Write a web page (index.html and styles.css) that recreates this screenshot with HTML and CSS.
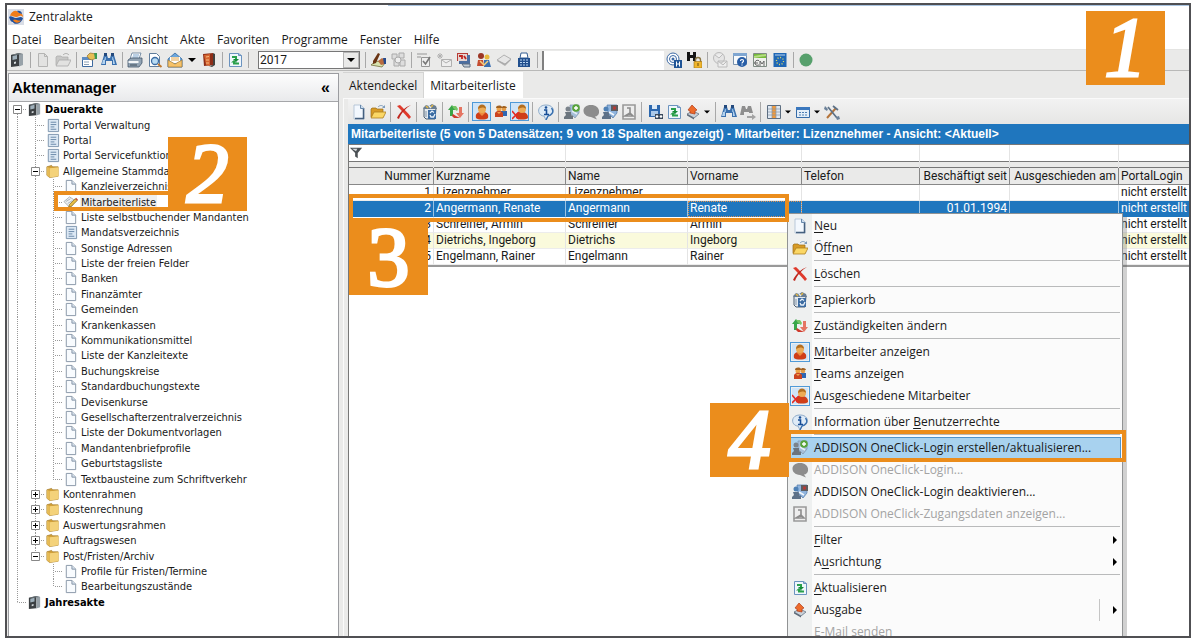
FILE: index.html
```html
<!DOCTYPE html>
<html lang="de">
<head>
<meta charset="utf-8">
<title>Zentralakte</title>
<link rel="stylesheet" href="styles.css">
</head>
<body>
<svg class="defs" aria-hidden="true">
<symbol id="logo" viewBox="0 0 16 16"><path d="M0 0h16v16H0z" fill="#d9dde6"/><path d="M2 7c1-5 7-7 9-3 3 0 4 2 4 4-3-3-5 0-7 0S4 6 2 7z" fill="#f07d1a"/><path d="M1 8c2-2 4 1 7 1s4-2 7 0c-1 5-8 8-10 4-2 0-3-2-4-5z" fill="#24519b"/><path d="M9 2c3-1 5 1 5 3l-3-1zM4 12c2 3 6 2 7 0-3 1-5-1-7 0z" fill="#24519b"/><path d="M5 11c3-2 5 2 8 0-1 3-6 4-8 0z" fill="#f07d1a"/></symbol>
<symbol id="binder" viewBox="0 0 16 16"><path d="M2 3l8-2v13l-8 1z" fill="#3c4043"/><path d="M10 1l4 1v11l-4 1.500z" fill="#98a2a9"/><path d="M3.500 4l4.500-1v4l-4.500 1z" fill="#9fb0bb"/><path d="M5 10l2-.5v2L5 12z" fill="#d8dde0"/><path d="M2 3l8-2 4 1-8 1z" fill="#6d767c"/></symbol>
<symbol id="doc" viewBox="0 0 16 16"><path d="M3.500 1.500h6l4 4v9h-10z" fill="#f8fbfe" stroke="#8594a5"/><path d="M9.500 1.500v4h4" fill="#d5e0ec" stroke="#8594a5"/></symbol>
<symbol id="new" viewBox="0 0 16 16"><path d="M3 1h7l3 3v11H3z" fill="#f3f8fe" stroke="#a9bdd2" stroke-width=".8"/><path d="M12.500 4v10.500H4" fill="none" stroke="#45607f" stroke-width="1.500"/><path d="M9.500 1v3.500H13" fill="#c8d9ec" stroke="#6787a9"/></symbol>
<symbol id="docoff" viewBox="0 0 16 16"><path d="M3.500 1.500h6l3 3v10h-9z" fill="#e2e2e1" stroke="#b4b4b3"/><path d="M9.500 1.500v3h3" fill="none" stroke="#b4b4b3"/></symbol>
<symbol id="list" viewBox="0 0 16 16"><path d="M3.500 1.500h11v13h-11z" fill="#dce8f4" stroke="#7c93ad"/><path d="M6 4.500h6M6 7h6M6 9.500h4M6 12h6" stroke="#6685a6"/></symbol>
<symbol id="edit" viewBox="0 0 16 16"><path d="M1 7l6-5 6 4-5 8z" fill="#eef1f3" stroke="#9aa2a8" stroke-width=".8"/><path d="M3 7l5-3M5 9l5-3" stroke="#a9b4bd"/><path d="M6 13l1-3 6-6 2 2-6 6z" fill="#e6bd45" stroke="#8a6b20" stroke-width=".8"/><path d="M13 4l2 2 1-1-2-2z" fill="#c34a36"/></symbol>
<symbol id="folder" viewBox="0 0 16 16"><path d="M2 3l5-1.500 1 1.500h6V13l-9 1.500L2 12z" fill="#d3a13a" stroke="#9c7423" stroke-width=".7"/><path d="M5 4.500l9.500-1V13L5 14.500z" fill="#f4d27a"/><path d="M2 3l3 1.500v10L2 12z" fill="#e5bb57"/></symbol>
<symbol id="open" viewBox="0 0 16 16"><path d="M1 5l1-1h4l1 1h6v8H1z" fill="#d89b26" stroke="#9b6f18" stroke-width=".7"/><path d="M4 8h12l-3 6H1z" fill="#fbd765" stroke="#ad7e1f" stroke-width=".8"/><path d="M8 3c2-2 4-2 6 0" fill="none" stroke="#7f9dbd"/><path d="M15 1v3h-3z" fill="#7f9dbd"/></symbol>
<symbol id="openoff" viewBox="0 0 16 16"><path d="M1 5l1-1h4l1 1h6v8H1z" fill="#c8c8c7" stroke="#aaa" stroke-width=".7"/><path d="M4 8h12l-3 6H1z" fill="#e2e2e1" stroke="#aaa" stroke-width=".8"/><path d="M8 3c2-2 4-2 6 0" fill="none" stroke="#aaa"/></symbol>
<symbol id="props" viewBox="0 0 16 16"><path d="M1.500 5.500h10v9h-10z" fill="#fff" stroke="#3e6a9f"/><path d="M1 5h11v3H1z" fill="#5d8cc4"/><path d="M3 10h5M3 12.500h5" stroke="#8da1b6"/><path d="M6 4l3-3 6 1v4l-4 2-3-1z" fill="#e7bd55" stroke="#93702b" stroke-width=".7"/><path d="M13 1h3v6h-2z" fill="#3c9a52"/></symbol>
<symbol id="binoc" viewBox="0 0 16 16"><path d="M3 3h3l1 3h2l1-3h3l3 10h-5V9H5v4H0z" fill="#3a70ae"/><path d="M3 1h3v3H3zM10 1h3v3h-3z" fill="#23497d"/><path d="M2 8h2v4H1zM12 8h1l1 4h-2z" fill="#b4d3ef"/><path d="M4 5h1v3H3zM11 5h1l1 3h-2z" fill="#8fb8e0"/></symbol>
<symbol id="binocoff" viewBox="0 0 16 16"><path d="M2 2h3l1 3h1l1-3h3l2 7H9V8H4v3H0z" fill="#8e8e8e"/><path d="M7 12h5v-2l4 3-4 3v-2H7z" fill="#a3a3a3"/></symbol>
<symbol id="print" viewBox="0 0 16 16"><path d="M5 1h9l-2 6H3z" fill="#fff" stroke="#5d7895" stroke-width=".8"/><path d="M6 3h6M5.500 5h6" stroke="#77a1cb"/><path d="M1 8l3-2h11v5l-3 4H1z" fill="#93a4b4" stroke="#42566b" stroke-width=".8"/><path d="M1.500 9h10v2h-10z" fill="#f3f6f8"/><path d="M3 13h7" stroke="#3d4c5b"/></symbol>
<symbol id="preview" viewBox="0 0 16 16"><path d="M2.500 1.500h7l3 3v10h-10z" fill="#fff" stroke="#607d9c"/><circle cx="8" cy="9" r="3.500" fill="#b9dcf4" stroke="#3c6ca3" stroke-width="1.300"/><path d="M11 12l3.500 3" stroke="#c07a31" stroke-width="2"/></symbol>
<symbol id="mail" viewBox="0 0 16 16"><path d="M1 7l7-6 7 6v8H1z" fill="#6ca6dc" stroke="#34689f" stroke-width=".8"/><path d="M3 5h10v6H3z" fill="#fff"/><path d="M4 6h8M4 8h8" stroke="#e5a547"/><path d="M1 15V8l7 4 7-4v7z" fill="#f7c268" stroke="#9b7a3e" stroke-width=".7"/></symbol>
<symbol id="door" viewBox="0 0 16 16"><path d="M2 2l10-1v12l-9 1z" fill="#8e2e18"/><path d="M3 3l6-1v12l-4-1z" fill="#d5642e"/><path d="M12 1l2 1v11l-3 2-3-1 4-1z" fill="#42423f"/><path d="M5 5l3-.5M5 8h3M5 11h3" stroke="#f6ba83"/></symbol>
<symbol id="refresh" viewBox="0 0 16 16"><path d="M2.500 1.500h9l3 2v11h-12z" fill="#eff6fc" stroke="#6b93bf"/><path d="M11.500 1.500v2h3" fill="none" stroke="#6b93bf"/><path d="M5 5h4v3M12 11.500H7V9" fill="none" stroke="#2aa04c" stroke-width="2"/><path d="M6 7h6L9 10z" fill="#178a3a"/><path d="M4 10.500L7 8l3 2.500z" fill="#2aa04c"/></symbol>
<symbol id="sign" viewBox="0 0 16 16"><path d="M1 13l5-4 9 2-3 4z" fill="#d7e2ad" stroke="#73713e" stroke-width=".8"/><path d="M3 9l5-8 2 1-4 9-3 1z" fill="#6a3413"/><path d="M8 9l4-3 3 2v4l-4 1z" fill="#b86b3f"/><path d="M13 6h3v6h-2z" fill="#25498c"/></symbol>
<symbol id="sheets" viewBox="0 0 16 16"><path d="M2 2h5v5H2zM9 1h5v5H9zM4 8h5v6H4zM10 8h5v6h-5z" fill="#ddd" stroke="#aaa"/><circle cx="8" cy="8" r="3" fill="#eee" stroke="#aaa"/></symbol>
<symbol id="checks" viewBox="0 0 16 16"><path d="M1 2h10M1 5h4M5.500 5.500h8v9h-8z" fill="#eee" stroke="#969696"/><path d="M7 9l2.500 3L14 5" fill="none" stroke="#777" stroke-width="1.600"/></symbol>
<symbol id="mailnew" viewBox="0 0 16 16"><path d="M5.500 7.500h10v7h-10z" fill="#eee" stroke="#b0b0b0"/><path d="M6 8l4 3 5-3M4 1v6M1 4h6M2 2l4 4M6 2L2 6" fill="none" stroke="#b0b0b0"/></symbol>
<symbol id="stack" viewBox="0 0 16 16"><path d="M1 1h11v8H1z" fill="#b73b35"/><path d="M3 3h11v9H3z" fill="#4b6ea0"/><path d="M2 2h9v7H2z" fill="#e5d5d2"/><path d="M3 4h3v3M8 4l2 3" stroke="#c0251f" stroke-width="1.800" fill="none"/><path d="M6 12h8v3H8z" fill="#c4cdd6" stroke="#5c6d80"/></symbol>
<symbol id="people" viewBox="0 0 16 16"><circle cx="5" cy="4" r="3" fill="#9c3524"/><circle cx="11" cy="5" r="2.500" fill="#e7b83d"/><path d="M1 14l1-6h5l1 6z" fill="#c54c30"/><path d="M8 15V8h5l2 7z" fill="#3b6fb1"/><path d="M4 9l4 4 4-4" fill="none" stroke="#f4d17e" stroke-width="1.500"/></symbol>
<symbol id="pad" viewBox="0 0 16 16"><path d="M1 9l7-5 7 4-6 6z" fill="#b0b0b0"/><path d="M1 8l7-5 7 4-6 5z" fill="#e6e6e6" stroke="#999" stroke-width=".7"/></symbol>
<symbol id="calc" viewBox="0 0 16 16"><path d="M5 1h6l1 5H4z" fill="#fff" stroke="#345e93"/><path d="M2 6h12v9H2z" fill="#214f8e"/><path d="M4 8h8M4 10.500h8M4 13h8" stroke="#b9d5f2" stroke-dasharray="2 1"/></symbol>
<symbol id="at" viewBox="0 0 16 16"><circle cx="7" cy="7" r="6" fill="#fff" stroke="#3d6aa5"/><circle cx="7" cy="7" r="3.500" fill="none" stroke="#3d6aa5"/><circle cx="7" cy="7" r="1.500" fill="#3d6aa5"/><path d="M8 8h8v8H8z" fill="#1f5496"/><path d="M10.500 9.500v5M13.500 9.500v5M10.500 12h3" stroke="#fff"/></symbol>
<symbol id="lock" viewBox="0 0 16 16"><path d="M1 0h3v3h3V0h3v9H7V6H4v3H1z" fill="#151515"/><path d="M9.500 10V8a2.500 2.500 0 0 1 5 0v2" fill="none" stroke="#8a7644" stroke-width="1.400"/><path d="M8 9.500h8V16H8z" fill="#f0b52c" stroke="#9c6e14" stroke-width=".6"/><path d="M12 11v3" stroke="#6b4a0b"/></symbol>
<symbol id="globeoff" viewBox="0 0 16 16"><circle cx="7" cy="6" r="5.500" fill="#e5e5e5" stroke="#bbb"/><path d="M3 3l4 3 4-4M6 9h9v6H6zM6 9l5 4 4-4" fill="#eee" stroke="#bbb"/></symbol>
<symbol id="help" viewBox="0 0 16 16"><path d="M1.500 1.500h13v11h-13z" fill="#f7fafc" stroke="#7c94ae"/><path d="M1 1h14v3H1z" fill="#7fa6d1"/><circle cx="10" cy="10" r="5" fill="#275da6"/><path d="M8.500 9c0-2 3-2 3 0 0 1-1.500 1-1.500 2.500M10 12.500v1" fill="none" stroke="#fff" stroke-width="1.200"/></symbol>
<symbol id="euro" viewBox="0 0 16 16"><path d="M1.500 1.500h13v13h-13z" fill="#eef0ec" stroke="#7f8b83"/><path d="M2 2h12v4H2z" fill="#75ba3b"/><path d="M2 4l12-2v2L2 6z" fill="#b6dc83"/><path d="M7 8.500c-3-1-4 1-4 2.500s1 3 4 2M2 11h4M8 14V9l2 3 2-3v5" fill="none" stroke="#666"/></symbol>
<symbol id="eu" viewBox="0 0 16 16"><path d="M1.500 1h13v14h-13z" fill="#1f67b5"/><path d="M3 3h10" stroke="#b9d3ee"/><circle cx="8" cy="9" r="3.500" fill="none" stroke="#e0dc65" stroke-dasharray="1 1.700" stroke-width="1.300"/></symbol>
<symbol id="dot" viewBox="0 0 16 16"><circle cx="8" cy="8" r="6.500" fill="#57a06c"/></symbol>
<symbol id="del" viewBox="0 0 16 16"><path d="M1 2l3-1c3 3 8 8 11 12l-2 2C9 10 5 6 1 2z" fill="#df3a2c"/><path d="M15 1C10 4 5 9 3 15l-2-1C4 8 9 3 15 1z" fill="#c0271d"/></symbol>
<symbol id="bin" viewBox="0 0 16 16"><path d="M2 4h12l-1 11H4L2 13z" fill="#e4eaf0" stroke="#4d5e70"/><path d="M1 4l3-3 3 1 3-2 4 2 1 3H2z" fill="#697d91"/><path d="M4 2l2 2M9 3l2-2" stroke="#e4b844" stroke-width="1.500"/><path d="M7 2l2 2" stroke="#e5edf4" stroke-width="1.500"/><path d="M6 6h8v9H6z" fill="#3b6ba1"/><path d="M8 9l2-2 2 1.500M13 10l-1.500 3H9l-1-2" fill="none" stroke="#e8f1fa" stroke-width="1.300"/><path d="M4 7v6" stroke="#8496a7"/></symbol>
<symbol id="swap" viewBox="0 0 16 16"><path d="M2 12V6H0l4-5 4 5H5v6z" fill="#39a648"/><path d="M4 2h4l2 3-1 2-3-2z" fill="#76c565"/><path d="M11 3h3v6h2l-4 5-4-5h3z" fill="#e57562"/><path d="M12 14H6l-2-2 1-2 3 2z" fill="#cf3a2d"/></symbol>
<symbol id="user" viewBox="0 0 16 16"><path d="M2 14c-1-5 2-6 6-6s7 1 6 6c-2 2-10 2-12 0z" fill="#cf3e18"/><path d="M5 9l3 3 3-3v-2H5z" fill="#ee8a3d"/><circle cx="8" cy="5" r="4" fill="#ecab55"/><path d="M4 5c0-6 8-6 8 0-2-2-5-2-8 0z" fill="#b46e1f"/></symbol>
<symbol id="team" viewBox="0 0 16 16"><path d="M8 7h6v5H8z" fill="#2e66b3"/><circle cx="6" cy="5" r="2.500" fill="#eda54a"/><circle cx="11" cy="5" r="2.300" fill="#e39a45"/><path d="M3 4c0-3 5-3 6-1 1-2 5-1 5 1z" fill="#a2611f"/><path d="M2 13V9c2-3 6-3 8 0v4z" fill="#cc4420"/><path d="M4 8l2 2 2-2z" fill="#f0a24c"/></symbol>
<symbol id="userx" viewBox="0 0 16 16"><path d="M4 14c-1-5 1-6 5-6s7 1 7 6c-2 2-10 2-12 0z" fill="#cf3e18"/><circle cx="10" cy="5" r="4" fill="#ecab55"/><path d="M6 5c0-6 8-6 8 0-2-2-5-2-8 0z" fill="#b46e1f"/><path d="M0 7l7 8M7 8l-7 7" stroke="#e32a23" stroke-width="1.600"/></symbol>
<symbol id="info" viewBox="0 0 16 16"><path d="M8 1c10 0 9 11 2 11l-2 4-2-4C-1 12-2 1 8 1z" fill="#deebf7" stroke="#8eabc9"/><path d="M13.500 4c3 4 0 7-3.500 8l-2 4" fill="none" stroke="#386fae" stroke-width="1.300"/><path d="M6 6h2.500v4.500M6 10.500h5" fill="none" stroke="#174d96" stroke-width="1.600"/><circle cx="8" cy="3.500" r="1.300" fill="#174d96"/></symbol>
<symbol id="login" viewBox="0 0 16 16"><path d="M6 1h9v8l-4 5-5-5z" fill="#a5bfda" stroke="#7f95ac" stroke-width=".7"/><circle cx="4" cy="5" r="2.500" fill="#7b838b"/><path d="M1 8h6v3l2 1v3H0v-2l2-2z" fill="#6b747d"/><path d="M8 7l5 3" stroke="#e5eef7" stroke-width="1.500"/><circle cx="12" cy="4" r="3.800" fill="#58a43a"/><path d="M12 2v4M10 4h4" stroke="#fff" stroke-width="1.400"/></symbol>
<symbol id="bubble" viewBox="0 0 16 16"><path d="M8 1c10 0 10 11 4 11.500l2 3-6-2.500C-2 12-2 1 8 1z" fill="#8c8c8c"/></symbol>
<symbol id="loginoff" viewBox="0 0 16 16"><path d="M5 1h10v8l-4 5-5-5z" fill="#8fb4de" stroke="#4d77a7" stroke-width=".7"/><circle cx="4" cy="5" r="2.500" fill="#4e80b5"/><path d="M1 8h6v3l2 1v3H0v-2l2-2z" fill="#5d7188"/><path d="M7 8l5 3" stroke="#f2f7fb" stroke-width="1.500"/><path d="M9 1h7v6H9z" fill="#5c5c60"/><path d="M11 2.500h3v3h-3z" fill="#b33c37"/></symbol>
<symbol id="access" viewBox="0 0 16 16"><path d="M2 1h12v14H2z" fill="#ededed" stroke="#999" stroke-width="1.600"/><path d="M6 4h3v5l-5 3h8L9 9" fill="none" stroke="#8c8c8c" stroke-width="1.600"/></symbol>
<symbol id="save" viewBox="0 0 16 16"><path d="M2 1h11v12H2z" fill="#2d68ae"/><path d="M5 1h5v4H5z" fill="#dce9f5"/><path d="M4 7h7v5H4z" fill="#aac9e9"/><path d="M8 10h8v5H8z" fill="#38485a"/><circle cx="10" cy="12.500" r="1.300" fill="#fff"/><circle cx="14" cy="12.500" r="1.300" fill="#fff"/></symbol>
<symbol id="output" viewBox="0 0 16 16"><path d="M2 10l6-3 6 3-5 4z" fill="#c9d1d9" stroke="#667585" stroke-width=".8"/><path d="M2 10l7 4v1.500l-7-4z" fill="#5c6876"/><path d="M7 1l5 5-2 1v3l-5-1V7L3 6z" fill="#ed6b2b" stroke="#b03b18" stroke-width=".7"/></symbol>
<symbol id="cols" viewBox="0 0 16 16"><path d="M1.500 1.500h13v13h-13z" fill="#dfe8f2" stroke="#5d6e81"/><path d="M6 2h4v12H6z" fill="#f39a3a"/><path d="M2 5h12M2 8h12M2 11h12M6 2v12M10 2v12" stroke="#8796a8" stroke-width=".7"/></symbol>
<symbol id="cal" viewBox="0 0 16 16"><path d="M1.500 3.500h13v10h-13z" fill="#e4eef8" stroke="#356ba8"/><path d="M1 3h14v3H1z" fill="#3a77bd"/><path d="M4 8.500h8M4 11h8" stroke="#4d7eb4" stroke-dasharray="2 1"/></symbol>
<symbol id="tools" viewBox="0 0 16 16"><path d="M3 14L12 4" stroke="#b5743a" stroke-width="2"/><path d="M9 2l5 4M4 3l9 11" stroke="#5c7187" stroke-width="1.700"/><path d="M1 2l3 3-1 2-3-2zM12 13l3-1 1 3-3 1z" fill="#6b8199"/></symbol>
<symbol id="funnel" viewBox="0 0 16 16"><path d="M1 2h14L10 8v6l-3-2V8z" fill="#4b5054"/><path d="M3.500 3h6L8 6z" fill="#d6dadd"/></symbol>
<symbol id="down" viewBox="0 0 8 8"><path d="M0 2h8L4 6z" fill="#000"/></symbol>
<symbol id="right" viewBox="0 0 8 8"><path d="M2 0l4 4-4 4z" fill="#000"/></symbol>
<symbol id="plus" viewBox="0 0 9 9"><path d="M.5.500h8v8h-8z" fill="#fff" stroke="#888"/><path d="M2 4.500h5M4.500 2v5" stroke="#000"/></symbol>
<symbol id="minus" viewBox="0 0 9 9"><path d="M.5.500h8v8h-8z" fill="#fff" stroke="#888"/><path d="M2 4.500h5" stroke="#000"/></symbol>
</svg>

<div class="window">
  <header class="titlebar"><svg class="ico"><use href="#logo"/></svg><span>Zentralakte</span></header>
  <nav class="menubar" aria-label="Hauptmenü">
    <button>Datei</button><button>Bearbeiten</button><button>Ansicht</button><button>Akte</button><button>Favoriten</button><button>Programme</button><button>Fenster</button><button>Hilfe</button>
  </nav>
  <div class="toolbar" role="toolbar" aria-label="Hauptleiste">
    <button class="tb" aria-label="Akte"><svg class="ico"><use href="#binder"/></svg></button><i class="sep"></i>
    <button class="tb" aria-label="Neu" disabled><svg class="ico"><use href="#docoff"/></svg></button>
    <button class="tb" aria-label="Öffnen" disabled><svg class="ico"><use href="#openoff"/></svg></button><i class="sep"></i>
    <button class="tb" aria-label="Eigenschaften"><svg class="ico"><use href="#props"/></svg></button>
    <button class="tb" aria-label="Suchen"><svg class="ico"><use href="#binoc"/></svg></button><i class="sep"></i>
    <button class="tb" aria-label="Drucken"><svg class="ico"><use href="#print"/></svg></button>
    <button class="tb" aria-label="Vorschau"><svg class="ico"><use href="#preview"/></svg></button>
    <button class="tb" aria-label="E-Mail"><svg class="ico"><use href="#mail"/></svg></button>
    <button class="tb arrow wide" aria-label="E-Mail Optionen"><svg><use href="#down"/></svg></button>
    <button class="tb" aria-label="Beenden"><svg class="ico"><use href="#door"/></svg></button><i class="sep"></i>
    <button class="tb" aria-label="Aktualisieren"><svg class="ico"><use href="#refresh"/></svg></button><i class="sep"></i>
    <span class="combo"><select aria-label="Jahr"><option>2017</option></select><span class="combo-btn"><svg><use href="#down"/></svg></span></span><i class="sep"></i>
    <button class="tb" aria-label="Signieren"><svg class="ico"><use href="#sign"/></svg></button>
    <button class="tb" aria-label="Blätter" disabled><svg class="ico"><use href="#sheets"/></svg></button><i class="sep"></i>
    <button class="tb" aria-label="Prüfen" disabled><svg class="ico"><use href="#checks"/></svg></button>
    <button class="tb" aria-label="Neue Nachricht" disabled><svg class="ico"><use href="#mailnew"/></svg></button>
    <button class="tb" aria-label="Termine"><svg class="ico"><use href="#stack"/></svg></button>
    <button class="tb" aria-label="Personen"><svg class="ico"><use href="#people"/></svg></button>
    <button class="tb" aria-label="Notiz" disabled><svg class="ico"><use href="#pad"/></svg></button>
    <button class="tb" aria-label="Rechner"><svg class="ico"><use href="#calc"/></svg></button><i class="sep"></i>
    <input class="quick" type="text" aria-label="Schnellsuche">
    <button class="tb" aria-label="Suche im Web"><svg class="ico"><use href="#at"/></svg></button>
    <button class="tb" aria-label="Sperren"><svg class="ico"><use href="#lock"/></svg></button><i class="sep"></i>
    <button class="tb" aria-label="Web-Post" disabled><svg class="ico"><use href="#globeoff"/></svg></button>
    <button class="tb" aria-label="Hilfe"><svg class="ico"><use href="#help"/></svg></button>
    <button class="tb" aria-label="Euro"><svg class="ico"><use href="#euro"/></svg></button>
    <button class="tb" aria-label="EU"><svg class="ico"><use href="#eu"/></svg></button><i class="sep"></i>
    <button class="tb" aria-label="Status"><svg class="ico"><use href="#dot"/></svg></button>
  </div>

  <div class="body">
    <aside class="sidebar">
      <div class="side-head"><h2>Aktenmanager</h2><button aria-label="Einklappen">«</button></div>
      <ul class="tree">
        <li><button class="g down h" aria-label="Zuklappen"><svg><use href="#minus"/></svg></button><svg class="ico"><use href="#binder"/></svg><a href="#" class="root">Dauerakte</a></li>
        <li><i class="g v"></i><i class="g v h"></i><svg class="ico"><use href="#list"/></svg><a href="#">Portal Verwaltung</a></li>
        <li><i class="g v"></i><i class="g v h"></i><svg class="ico"><use href="#list"/></svg><a href="#">Portal</a></li>
        <li><i class="g v"></i><i class="g v h"></i><svg class="ico"><use href="#list"/></svg><a href="#">Portal Servicefunktionen</a></li>
        <li><i class="g v"></i><button class="g v h" aria-label="Zuklappen"><svg><use href="#minus"/></svg></button><svg class="ico"><use href="#folder"/></svg><a href="#">Allgemeine Stammdaten</a></li>
        <li><i class="g v"></i><i class="g v"></i><i class="g v h"></i><svg class="ico"><use href="#doc"/></svg><a href="#">Kanzleiverzeichnis</a></li>
        <li><i class="g v"></i><i class="g v"></i><i class="g v h"></i><svg class="ico"><use href="#edit"/></svg><a href="#" class="current">Mitarbeiterliste</a></li>
        <li><i class="g v"></i><i class="g v"></i><i class="g v h"></i><svg class="ico"><use href="#doc"/></svg><a href="#">Liste selbstbuchender Mandanten</a></li>
        <li><i class="g v"></i><i class="g v"></i><i class="g v h"></i><svg class="ico"><use href="#list"/></svg><a href="#">Mandatsverzeichnis</a></li>
        <li><i class="g v"></i><i class="g v"></i><i class="g v h"></i><svg class="ico"><use href="#doc"/></svg><a href="#">Sonstige Adressen</a></li>
        <li><i class="g v"></i><i class="g v"></i><i class="g v h"></i><svg class="ico"><use href="#doc"/></svg><a href="#">Liste der freien Felder</a></li>
        <li><i class="g v"></i><i class="g v"></i><i class="g v h"></i><svg class="ico"><use href="#doc"/></svg><a href="#">Banken</a></li>
        <li><i class="g v"></i><i class="g v"></i><i class="g v h"></i><svg class="ico"><use href="#doc"/></svg><a href="#">Finanzämter</a></li>
        <li><i class="g v"></i><i class="g v"></i><i class="g v h"></i><svg class="ico"><use href="#doc"/></svg><a href="#">Gemeinden</a></li>
        <li><i class="g v"></i><i class="g v"></i><i class="g v h"></i><svg class="ico"><use href="#doc"/></svg><a href="#">Krankenkassen</a></li>
        <li><i class="g v"></i><i class="g v"></i><i class="g v h"></i><svg class="ico"><use href="#doc"/></svg><a href="#">Kommunikationsmittel</a></li>
        <li><i class="g v"></i><i class="g v"></i><i class="g v h"></i><svg class="ico"><use href="#doc"/></svg><a href="#">Liste der Kanzleitexte</a></li>
        <li><i class="g v"></i><i class="g v"></i><i class="g v h"></i><svg class="ico"><use href="#doc"/></svg><a href="#">Buchungskreise</a></li>
        <li><i class="g v"></i><i class="g v"></i><i class="g v h"></i><svg class="ico"><use href="#doc"/></svg><a href="#">Standardbuchungstexte</a></li>
        <li><i class="g v"></i><i class="g v"></i><i class="g v h"></i><svg class="ico"><use href="#doc"/></svg><a href="#">Devisenkurse</a></li>
        <li><i class="g v"></i><i class="g v"></i><i class="g v h"></i><svg class="ico"><use href="#doc"/></svg><a href="#">Gesellschafterzentralverzeichnis</a></li>
        <li><i class="g v"></i><i class="g v"></i><i class="g v h"></i><svg class="ico"><use href="#doc"/></svg><a href="#">Liste der Dokumentvorlagen</a></li>
        <li><i class="g v"></i><i class="g v"></i><i class="g v h"></i><svg class="ico"><use href="#doc"/></svg><a href="#">Mandantenbriefprofile</a></li>
        <li><i class="g v"></i><i class="g v"></i><i class="g v h"></i><svg class="ico"><use href="#doc"/></svg><a href="#">Geburtstagsliste</a></li>
        <li><i class="g v"></i><i class="g v"></i><i class="g up h"></i><svg class="ico"><use href="#doc"/></svg><a href="#">Textbausteine zum Schriftverkehr</a></li>
        <li><i class="g v"></i><button class="g v h" aria-label="Aufklappen"><svg><use href="#plus"/></svg></button><svg class="ico"><use href="#folder"/></svg><a href="#">Kontenrahmen</a></li>
        <li><i class="g v"></i><button class="g v h" aria-label="Aufklappen"><svg><use href="#plus"/></svg></button><svg class="ico"><use href="#folder"/></svg><a href="#">Kostenrechnung</a></li>
        <li><i class="g v"></i><button class="g v h" aria-label="Aufklappen"><svg><use href="#plus"/></svg></button><svg class="ico"><use href="#folder"/></svg><a href="#">Auswertungsrahmen</a></li>
        <li><i class="g v"></i><button class="g v h" aria-label="Aufklappen"><svg><use href="#plus"/></svg></button><svg class="ico"><use href="#folder"/></svg><a href="#">Auftragswesen</a></li>
        <li><i class="g v"></i><button class="g up h" aria-label="Zuklappen"><svg><use href="#minus"/></svg></button><svg class="ico"><use href="#folder"/></svg><a href="#">Post/Fristen/Archiv</a></li>
        <li><i class="g v"></i><i class="g"></i><i class="g v h"></i><svg class="ico"><use href="#doc"/></svg><a href="#">Profile für Fristen/Termine</a></li>
        <li><i class="g v"></i><i class="g"></i><i class="g up h"></i><svg class="ico"><use href="#doc"/></svg><a href="#">Bearbeitungszustände</a></li>
        <li><i class="g up h"></i><svg class="ico"><use href="#binder"/></svg><a href="#" class="root">Jahresakte</a></li>
      </ul>
    </aside>

    <main class="main">
      <div class="tabs" role="tablist"><button role="tab">Aktendeckel</button><button role="tab" aria-selected="true">Mitarbeiterliste</button></div>
      <div class="panel">
        <div class="toolbar list-tools" role="toolbar" aria-label="Listenleiste">
          <button class="tb" aria-label="Neu"><svg class="ico"><use href="#new"/></svg></button>
          <button class="tb" aria-label="Öffnen"><svg class="ico"><use href="#open"/></svg></button><i class="sep"></i>
          <button class="tb" aria-label="Löschen"><svg class="ico"><use href="#del"/></svg></button><i class="sep"></i>
          <button class="tb" aria-label="Papierkorb"><svg class="ico"><use href="#bin"/></svg></button><i class="sep"></i>
          <button class="tb" aria-label="Zuständigkeiten ändern"><svg class="ico"><use href="#swap"/></svg></button><i class="sep"></i>
          <button class="tb on" aria-label="Mitarbeiter anzeigen"><svg class="ico"><use href="#user"/></svg></button>
          <button class="tb" aria-label="Teams anzeigen"><svg class="ico"><use href="#team"/></svg></button>
          <button class="tb on" aria-label="Ausgeschiedene Mitarbeiter"><svg class="ico"><use href="#userx"/></svg></button><i class="sep"></i>
          <button class="tb" aria-label="Benutzerrechte"><svg class="ico"><use href="#info"/></svg></button><i class="sep"></i>
          <button class="tb" aria-label="Login erstellen"><svg class="ico"><use href="#login"/></svg></button>
          <button class="tb" aria-label="Login" disabled><svg class="ico"><use href="#bubble"/></svg></button>
          <button class="tb" aria-label="Login deaktivieren"><svg class="ico"><use href="#loginoff"/></svg></button>
          <button class="tb" aria-label="Zugangsdaten" disabled><svg class="ico"><use href="#access"/></svg></button><i class="sep"></i>
          <button class="tb" aria-label="Speichern"><svg class="ico"><use href="#save"/></svg></button>
          <button class="tb" aria-label="Aktualisieren"><svg class="ico"><use href="#refresh"/></svg></button>
          <button class="tb" aria-label="Ausgabe"><svg class="ico"><use href="#output"/></svg></button>
          <button class="tb arrow" aria-label="Ausgabe Optionen"><svg><use href="#down"/></svg></button><i class="sep"></i>
          <button class="tb" aria-label="Suchen"><svg class="ico"><use href="#binoc"/></svg></button>
          <button class="tb" aria-label="Weitersuchen" disabled><svg class="ico"><use href="#binocoff"/></svg></button><i class="sep"></i>
          <button class="tb" aria-label="Spalten"><svg class="ico"><use href="#cols"/></svg></button>
          <button class="tb arrow" aria-label="Spalten Optionen"><svg><use href="#down"/></svg></button>
          <button class="tb" aria-label="Ansicht"><svg class="ico"><use href="#cal"/></svg></button>
          <button class="tb arrow" aria-label="Ansicht Optionen"><svg><use href="#down"/></svg></button>
          <button class="tb" aria-label="Werkzeuge"><svg class="ico"><use href="#tools"/></svg></button>
        </div>
        <h1 class="list-title">Mitarbeiterliste (5 von 5 Datensätzen; 9 von 18 Spalten angezeigt) - Mitarbeiter: Lizenznehmer - Ansicht: &lt;Aktuell&gt;</h1>
        <div class="sheet">
          <table>
            <colgroup><col class="c1"><col class="c2"><col class="c3"><col class="c4"><col class="c5"><col class="c6"><col class="c7"><col></colgroup>
            <thead>
              <tr class="filter"><td><svg class="funnel"><use href="#funnel"/></svg></td><td></td><td></td><td></td><td></td><td></td><td></td><td></td></tr>
              <tr><th class="r">Nummer</th><th>Kurzname</th><th>Name</th><th>Vorname</th><th>Telefon</th><th class="r">Beschäftigt seit</th><th class="r">Ausgeschieden am</th><th>PortalLogin</th></tr>
            </thead>
            <tbody>
              <tr><td class="r">1</td><td>Lizenznehmer</td><td>Lizenznehmer</td><td></td><td></td><td></td><td></td><td>nicht erstellt</td></tr>
              <tr class="sel"><td class="r">2</td><td>Angermann, Renate</td><td>Angermann</td><td class="focus">Renate</td><td></td><td class="r">01.01.1994</td><td></td><td>nicht erstellt</td></tr>
              <tr><td class="r">3</td><td>Schreiner, Armin</td><td>Schreiner</td><td>Armin</td><td></td><td></td><td></td><td>nicht erstellt</td></tr>
              <tr class="alt"><td class="r">4</td><td>Dietrichs, Ingeborg</td><td>Dietrichs</td><td>Ingeborg</td><td></td><td></td><td></td><td>nicht erstellt</td></tr>
              <tr><td class="r">5</td><td>Engelmann, Rainer</td><td>Engelmann</td><td>Rainer</td><td></td><td></td><td></td><td>nicht erstellt</td></tr>
            </tbody>
          </table>
        </div>
      </div>
    </main>
  </div>

  <div class="context" role="menu">
    <button role="menuitem"><svg class="ico"><use href="#new"/></svg><span><u>N</u>eu</span></button>
    <button role="menuitem"><svg class="ico"><use href="#open"/></svg><span>Ö<u>f</u>fnen</span></button>
    <hr>
    <button role="menuitem"><svg class="ico"><use href="#del"/></svg><span><u>L</u>öschen</span></button>
    <hr>
    <button role="menuitem"><svg class="ico"><use href="#bin"/></svg><span><u>P</u>apierkorb</span></button>
    <hr>
    <button role="menuitem"><svg class="ico"><use href="#swap"/></svg><span><u>Z</u>uständigkeiten ändern</span></button>
    <hr>
    <button role="menuitem"><svg class="ico on"><use href="#user"/></svg><span><u>M</u>itarbeiter anzeigen</span></button>
    <button role="menuitem"><svg class="ico"><use href="#team"/></svg><span><u>T</u>eams anzeigen</span></button>
    <button role="menuitem"><svg class="ico on"><use href="#userx"/></svg><span><u>A</u>usgeschiedene Mitarbeiter</span></button>
    <hr>
    <button role="menuitem"><svg class="ico"><use href="#info"/></svg><span>Information über <u>B</u>enutzerrechte</span></button>
    <hr>
    <button role="menuitem" class="hot"><svg class="ico"><use href="#login"/></svg><span>ADDISON OneClick-Login erstellen/aktualisieren...</span></button>
    <button role="menuitem" disabled><svg class="ico"><use href="#bubble"/></svg><span>ADDISON OneClick-Login...</span></button>
    <button role="menuitem"><svg class="ico"><use href="#loginoff"/></svg><span>ADDISON OneClick-Login deaktivieren...</span></button>
    <button role="menuitem" disabled><svg class="ico"><use href="#access"/></svg><span>ADDISON OneClick-Zugangsdaten anzeigen...</span></button>
    <hr>
    <button role="menuitem"><i class="ico"></i><span><u>F</u>ilter</span><svg class="more"><use href="#right"/></svg></button>
    <button role="menuitem"><i class="ico"></i><span>A<u>u</u>srichtung</span><svg class="more"><use href="#right"/></svg></button>
    <hr>
    <button role="menuitem"><svg class="ico"><use href="#refresh"/></svg><span><u>A</u>ktualisieren</span></button>
    <button role="menuitem" class="split"><svg class="ico"><use href="#output"/></svg><span>Ausgabe</span><svg class="more"><use href="#right"/></svg></button>
    <button role="menuitem" disabled><i class="ico"></i><span>E-Mail senden</span></button>
  </div>

  <div class="frame f2"></div><div class="frame f3"></div><div class="frame f4"></div>
  <div class="step s1">1</div><div class="step s2">2</div><div class="step s3">3</div><div class="step s4">4</div>
</div>
</body>
</html>
```
FILE: styles.css
```css
* { box-sizing: border-box; }
body { margin: 0; padding: 3px 2px 4px 5px; background: #fff; color: #1a1a1a; font: 12px/16px "Open Sans", "Noto Sans", sans-serif; }
button, select, input { font: inherit; color: inherit; margin: 0; padding: 0; border: 0; background: none; border-radius: 0; }
.defs { position: absolute; width: 0; height: 0; }
.ico { width: 16px; height: 16px; flex: none; display: block; }

.window { position: relative; display: flex; flex-direction: column; height: calc(100vh - 7px); min-height: 560px; border: 2px solid #505053; background: #eaeae9; overflow: hidden; }
.titlebar { display: flex; align-items: center; gap: 5px; height: 24px; padding-left: 1px; background: linear-gradient(to right, transparent 381px, #a9c5e2 381px) 0 0 / 100% 1px no-repeat #fff; }
.menubar { display: flex; gap: 12px; height: 21px; padding: 1px 0 0 5px; background: #fff; border-bottom: 1px solid #e4e4e2; }

.toolbar { display: flex; align-items: center; height: 21px; flex: none; background: #eaeae9; border-bottom: 1px solid #b9b9b8; }
.tb { display: flex; align-items: center; justify-content: center; width: 20px; height: 18px; flex: none; }
.tb svg { flex: none; }
.arrow svg { width: 6px; height: 6px; }
.arrow.wide { width: 14px; }
.arrow.wide svg { width: 8px; height: 8px; }
.sep { width: 1px; height: 16px; margin: 0 2px 0 3px; background: #a8a8a8; flex: none; }
.combo { display: flex; width: 102px; height: 18px; margin: 0 2px 0 7px; background: #fff; border: 1px solid #777; flex: none; }
.combo select { flex: 1; min-width: 0; appearance: none; padding-left: 1px; font: 12px/16px Roboto, sans-serif; }
.combo-btn { display: flex; align-items: center; justify-content: center; width: 16px; background: #eaeae9; border: 1px solid #b5b5b5; pointer-events: none; }
.combo-btn svg { width: 8px; height: 8px; }
.quick { width: 122px; height: 19px; margin-left: 2px; background: #fff; border-left: 2px solid #808080; flex: none; }

.body { display: grid; grid-template-columns: 332px minmax(0, 1fr); gap: 4px; flex: 1; min-height: 0; }
.sidebar { display: flex; flex-direction: column; min-height: 0; margin: 2px 0 0 1px; border: 1px solid #9b9ca0; border-bottom: 0; background: #fff; }
.side-head { display: flex; align-items: center; justify-content: space-between; height: 28px; flex: none; padding: 0 8px 0 3px; background: linear-gradient(#fdfdfd, #e9eaec); border-bottom: 1px solid #a5a6a9; }
.side-head h2 { margin: 0; font: bold 15px/18px "Liberation Sans", sans-serif; color: #000; }
.side-head button { font: bold 16px/16px "Liberation Sans", sans-serif; color: #000; }

.tree { display: flex; flex-direction: column; flex: 1; min-height: 0; margin: 0; padding: 0 0 26px; list-style: none; font: 11px/15px "DejaVu Sans Condensed", "DejaVu Sans", sans-serif; }
.tree li { display: flex; align-items: center; flex: 1 1 0; min-height: 0; }
.tree .ico { width: 15px; height: 15px; margin-right: 2px; }
.tree a { color: inherit; text-decoration: none; padding: 0 1px; white-space: nowrap; }
.tree .root { font-weight: bold; color: #000; }
.tree .current { background: #efefee; }
.g { display: flex; align-items: center; justify-content: center; width: 18px; padding-right: 1px; align-self: stretch; flex: none; --v: repeating-linear-gradient(to bottom, #999 0 1px, #fff 1px 2px); --h: linear-gradient(transparent, transparent); --vs: 8px 0 / 1px 0; background: var(--v) var(--vs) no-repeat, var(--h) 8px 50% / 10px 1px no-repeat; }
.g svg { width: 9px; height: 9px; }
.g.v { --vs: 8px 0 / 1px 100%; }
.g.up { --vs: 8px 0 / 1px 50%; }
.g.down { --vs: 8px 100% / 1px 50%; }
.g.h { --h: repeating-linear-gradient(to right, #999 0 1px, #fff 1px 2px); }

.main { display: flex; flex-direction: column; min-width: 0; min-height: 0; }
.tabs { display: flex; height: 27px; flex: none; padding-top: 1px; }
.tabs button { padding: 0 6px; border: 1px solid #d4d4d3; border-width: 1px 1px 0 0; }
.tabs [aria-selected] { background: #fff; border-color: #fff; }
.panel { display: flex; flex-direction: column; flex: 1; min-height: 0; padding-left: 4px; border: 1px solid #fafafa; border-width: 1px 0 0 1px; background: #eaeae9; }
.list-tools { height: 25px; border: 0; padding-left: 1px; background: linear-gradient(#f2f2f2, #e6e6e5); }
.list-tools .tb { width: 19px; }
.list-tools .tb.on { height: 19px; background: #cfe4f7; border: 1px solid #4f9ad8; }
.list-tools .tb.arrow { width: 10px; }
.list-tools .sep { height: 20px; margin: 0 3px; }
.list-title { margin: 0; padding: 0 3px; height: 20px; flex: none; background: #1f76be; color: #fff; font: bold 12px/20px "Liberation Sans", sans-serif; white-space: nowrap; overflow: hidden; }
.sheet { flex: 1; background: #fff; border-left: 1px solid #777; border-top: 1px solid #777; }
table { width: 100%; table-layout: fixed; border-collapse: separate; border-spacing: 0; border-bottom: 2px solid #999; font: 12px/15px Roboto, sans-serif; }
.c1 { width: 85px; } .c2 { width: 132px; } .c3 { width: 122px; } .c4 { width: 114px; } .c5 { width: 118px; } .c6 { width: 90px; } .c7 { width: 109px; }
th, td { height: 16px; padding: 0 2px; text-align: left; font-weight: normal; white-space: nowrap; overflow: hidden; border-right: 1px solid #e4e4e4; border-bottom: 1px solid #ececec; }
th { height: 17px; background: #eaeae9; border-color: #888; }
.r { text-align: right; }
th:last-child, td:last-child { border-right: 0; }
.filter td { height: 23px; background: linear-gradient(#fff 16px, #777 16px 17px, #eaeae9 17px 22px, #777 22px); border-bottom: 0; padding: 0; vertical-align: top; }
.funnel { display: block; width: 14px; height: 14px; margin-top: 1px; }
.sel td { background: #1f76be; color: #fff; border-right-color: #9cc3e4; border-bottom-color: #1f76be; }
.sel .focus { outline: 1px dotted #e0914d; outline-offset: -1px; }
.alt td { background: #fafadc; }

.context { position: absolute; left: 780px; top: 208px; width: 336px; padding: 1px; background: linear-gradient(to right, #eef0f0 24px, #fbfbfb 24px); border: 1px solid #919394; box-shadow: 4px 4px 0 rgba(90, 90, 90, .28); }
.context button { display: flex; align-items: center; width: 100%; height: 22px; padding-left: 3px; white-space: nowrap; text-align: left; }
.context span { flex: 1; margin-left: 6px; }
.context u { text-underline-offset: 2px; }
.context hr { height: 1px; margin: 1px 1px 2px 25px; border: 0; background: #b9babb; }
.context button:disabled { color: #a3a3a3; }
.context .on { outline: 1px solid #4f9ad8; outline-offset: 1px; background: #cfe4f7; }
.context .hot { background: #a8d2ef; border: 1px solid #4f94cc; padding-left: 2px; }
.more { width: 8px; height: 8px; flex: none; margin-right: 2px; }
.split .more { width: 21px; height: 8px; padding-left: 13px; }
.split { background: linear-gradient(#c5c5c5, #c5c5c5) calc(100% - 21px) 50% / 1px 100% no-repeat; }

.frame { position: absolute; border: 4px solid #eb8d1c; }
.f2 { left: 47px; top: 186px; width: 120px; height: 20px; }
.f3 { left: 342px; top: 189px; width: 440px; height: 28px; }
.f4 { left: 780px; top: 425px; width: 339px; height: 32px; }
.step { position: absolute; display: flex; align-items: center; justify-content: center; width: 79px; height: 74px; background: #eb8d1c; color: #fff; font: italic 84px/74px "Liberation Serif", serif; -webkit-text-stroke: 3px #fff; }
.s1 { left: 1079px; top: 6px; }
.s2 { left: 161px; top: 132px; }
.s3 { left: 342px; top: 216px; font-style: normal; }
.s4 { left: 703px; top: 398px; }
```
